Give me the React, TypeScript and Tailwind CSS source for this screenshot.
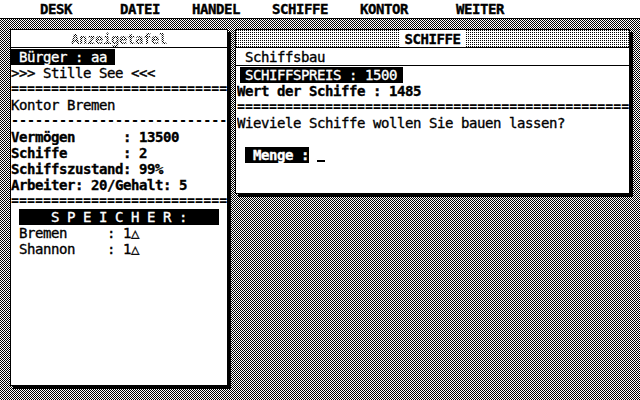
const checker = "bg-[repeating-conic-gradient(#000_0_25%,#fff_0_50%)] bg-[length:2px_2px]";
const dots = "bg-[conic-gradient(#fff_0_75%,#000_0)] bg-[length:2px_2px]";
// separator rows at an exact 8px advance so the glyphs keep a small gap
const rule = "font-bold text-[13.3px] tracking-normal [-webkit-text-stroke-width:0px]";

const menu = [
  { label: "DESK", w: "w-[80px]" },
  { label: "DATEI", w: "w-[72px]" },
  { label: "HANDEL", w: "w-[80px]" },
  { label: "SCHIFFE", w: "w-[88px]" },
  { label: "KONTOR", w: "w-[96px]" },
  { label: "WEITER", w: "w-[96px]" },
];

function Row({ children, className = "" }: { children: React.ReactNode; className?: string }) {
  return <div className={`h-[16px] whitespace-pre overflow-hidden ${className}`}>{children}</div>;
}

function Inverse({ children, className = "" }: { children: React.ReactNode; className?: string }) {
  return <span className={`inline-block h-[16px] bg-black text-white whitespace-pre ${className}`}>{children}</span>;
}

export default function App() {
  return (
    <div className="w-[640px] h-[400px] overflow-hidden flex flex-col bg-white text-black font-['DejaVu_Sans_Mono',monospace] text-[14px] leading-[16px] tracking-[-0.43px] [-webkit-text-stroke-width:0.35px]">
      {/* menu bar */}
      <div className="h-[19px] shrink-0 border-b border-black flex items-center pl-[40px] font-bold">
        {menu.map((m) => (
          <span key={m.label} className={`${m.w} whitespace-pre`}>{m.label}</span>
        ))}
      </div>

      {/* desktop */}
      <div className={`relative flex-1 ${checker}`}>
        {/* Anzeigetafel (inactive) */}
        <div className="absolute left-[10px] top-[10px] w-[218px] h-[357px] border border-black bg-white shadow-[3px_3px_0_#000] flex flex-col">
          <div className="h-[18px] shrink-0 border-b border-black flex items-center justify-center">
            <span className={`font-bold bg-clip-text text-transparent [-webkit-text-stroke-width:0px] ${checker}`}>Anzeigetafel</span>
          </div>
          <div className="pt-px">
            <Row><Inverse> Bürger : aa </Inverse></Row>
            <Row>{">>> Stille See <<<"}</Row>
            <Row className={rule}>{"=".repeat(27)}</Row>
            <Row>Kontor Bremen</Row>
            <Row className={rule}>{"-".repeat(27)}</Row>
            <Row className="font-bold">Vermögen      : 13500</Row>
            <Row className="font-bold">Schiffe       : 2</Row>
            <Row className="font-bold">Schiffszustand: 99%</Row>
            <Row className="font-bold">Arbeiter: 20/Gehalt: 5</Row>
            <Row className={rule}>{"=".repeat(27)}</Row>
            <Row className="pl-[8px]"><Inverse>    S P E I C H E R :    </Inverse></Row>
            <Row> Bremen     : 1△</Row>
            <Row> Shannon    : 1△</Row>
          </div>
        </div>

        {/* SCHIFFE (active) */}
        <div className="absolute left-[235px] top-[10px] w-[395px] h-[165px] border border-black bg-white shadow-[3px_3px_0_#000] flex flex-col">
          <div className={`h-[18px] shrink-0 border-b border-black flex justify-center ${dots}`}>
            <span className="bg-white px-[5px] font-bold flex items-center whitespace-pre">SCHIFFE</span>
          </div>
          <div className="h-[18px] shrink-0 border-b border-black pl-[9px] flex items-center">Schiffsbau</div>
          <div className="pl-px pt-px">
            <Row><Inverse className="ml-[3px] pl-[5px] pr-[6px]">SCHIFFSPREIS : 1500</Inverse></Row>
            <Row className="font-bold">Wert der Schiffe : 1485</Row>
            <Row className={rule}>{"=".repeat(49)}</Row>
            <Row>Wieviele Schiffe wollen Sie bauen lassen?</Row>
            <Row> </Row>
            <Row className="pl-[8px] flex">
              <Inverse className="font-bold"> Menge :</Inverse>
              <span className="ml-[8px] w-[8px] h-[15px] border-b-2 border-black" />
            </Row>
          </div>
        </div>
      </div>
    </div>
  );
}
